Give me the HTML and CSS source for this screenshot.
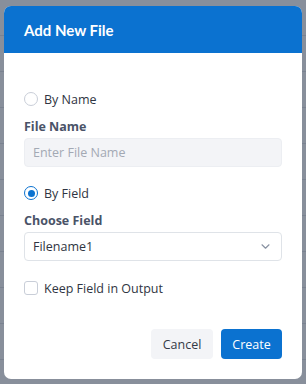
FILE: index.html
```html
<!DOCTYPE html>
<html>
<head>
<meta charset="utf-8">
<link rel="stylesheet" href="styles.css">
</head>
<body>
<div class="page">
  <div class="row"></div>
  <div class="row"></div>
  <div class="row"></div>
  <div class="row"></div>
  <div class="row"></div>
  <div class="row"></div>
  <div class="row"></div>
  <div class="row"></div>
  <div class="row"></div>
  <div class="row"></div>
</div>
<div class="overlay">
  <div class="modal">
    <div class="modal-header">Add New File</div>
    <div class="modal-body">
      <label class="option first">
        <span class="radio"></span>
        <span>By Name</span>
      </label>
      <div class="field-label">File Name</div>
      <div class="input placeholder">Enter File Name</div>

      <label class="option second">
        <span class="radio checked"></span>
        <span>By Field</span>
      </label>
      <div class="field-label">Choose Field</div>
      <div class="input select">
        <span>Filename1</span>
        <svg class="chevron" width="9" height="5" viewBox="0 0 9 5"><path d="M1 0.8l3.5 3.4 3.5-3.4" fill="none" stroke="#8a93a3" stroke-width="1.2" stroke-linecap="round" stroke-linejoin="round"/></svg>
      </div>

      <label class="option third">
        <span class="checkbox"></span>
        <span>Keep Field in Output</span>
      </label>

      <div class="actions">
        <button class="btn btn-cancel">Cancel</button>
        <button class="btn btn-primary">Create</button>
      </div>
    </div>
  </div>
</div>
</body>
</html>
```
FILE: styles.css
```css
* { box-sizing: border-box; }
html, body { margin: 0; padding: 0; }
body {
  width: 306px;
  height: 384px;
  overflow: hidden;
  position: relative;
  font-family: "Open Sans", "Noto Sans", sans-serif;
  background: #ffffff;
}
.page .row {
  height: 36px;
  border-bottom: 1px solid #d4d7dc;
}
.overlay {
  position: absolute;
  inset: 0;
  background: rgba(80, 90, 108, 0.68);
  padding: 6px 4px 5px 4px;
}
.modal {
  width: 298px;
  height: 373px;
  background: #ffffff;
  border-radius: 7px;
  overflow: hidden;
  display: flex;
  flex-direction: column;
}
.modal-header {
  height: 47px;
  background: #0b72d0;
  color: #ffffff;
  font-family: "Lato", "Open Sans", sans-serif;
  font-weight: 700;
  font-size: 15px;
  padding: 0 20px;
  display: flex;
  align-items: center;
}
.modal-body {
  padding: 36px 20px 20px 20px;
  display: flex;
  flex-direction: column;
  flex: 1;
}
.option {
  display: flex;
  align-items: center;
  gap: 6px;
  height: 20px;
  font-size: 12.5px;
  color: #2f3542;
}
.option.second { margin-top: 16px; }
.option.third { margin-top: 17px; }
.radio {
  width: 14px;
  height: 14px;
  border-radius: 50%;
  border: 1px solid #c9ced8;
  background: #fff;
  display: inline-flex;
  align-items: center;
  justify-content: center;
}
.radio.checked {
  border: 1.5px solid #0b72d0;
}
.radio.checked::after {
  content: "";
  width: 7px;
  height: 7px;
  border-radius: 50%;
  background: #0b72d0;
}
.checkbox {
  width: 14px;
  height: 14px;
  border-radius: 3px;
  border: 1px solid #c9ced8;
  background: #fff;
}
.field-label {
  margin-top: 9px;
  height: 18px;
  line-height: 18px;
  font-size: 12.5px;
  font-weight: 700;
  color: #4a5368;
}
.input {
  margin-top: 2px;
  height: 29px;
  border: 1px solid #e6e9ee;
  border-radius: 4px;
  padding: 0 8px;
  display: flex;
  align-items: center;
  font-size: 12.5px;
}
.placeholder {
  background: #f3f4f7;
  color: #a3a9b4;
  border-color: #eceef2;
}
.select {
  background: #fff;
  color: #2f3542;
  justify-content: space-between;
  border-color: #dfe3e8;
}
.chevron { margin-right: 3px; }
.actions {
  margin-top: auto;
  display: flex;
  justify-content: flex-end;
  gap: 8px;
}
.btn {
  height: 30px;
  border: none;
  border-radius: 4px;
  font-family: "Open Sans", "Noto Sans", sans-serif;
  font-size: 12.5px;
  padding: 0;
}
.btn-cancel {
  background: #f3f4f7;
  color: #333a46;
  width: 62px;
}
.btn-primary {
  background: #0b72d0;
  color: #ffffff;
  width: 61px;
}
```
